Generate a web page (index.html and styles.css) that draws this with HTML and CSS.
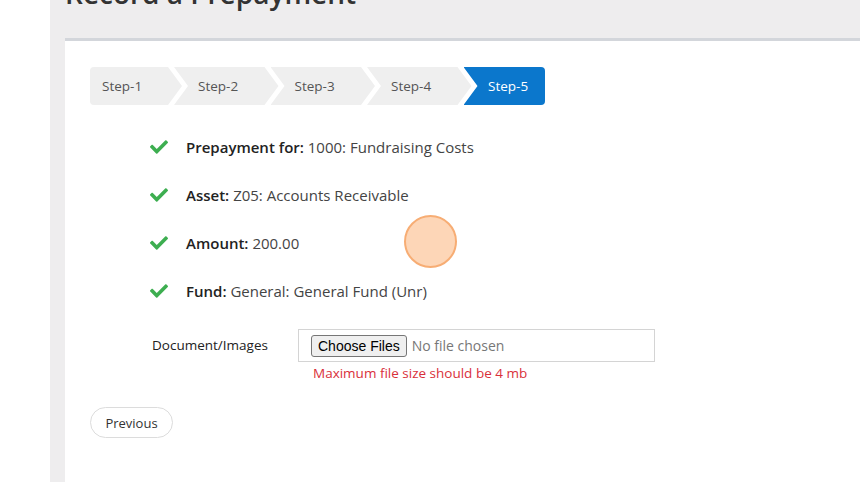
FILE: index.html
```html
<!DOCTYPE html>
<html lang="en">
<head>
<meta charset="utf-8">
<title>Record a Prepayment</title>
<link rel="stylesheet" href="styles.css">
</head>
<body>
<div class="gutter"></div>
<main class="panel">
  <h1 class="title">Record a Prepayment</h1>
  <section class="card">
    <nav class="steps">
      <div class="step first">Step-1</div>
      <div class="step">Step-2</div>
      <div class="step">Step-3</div>
      <div class="step">Step-4</div>
      <div class="step last active">Step-5</div>
    </nav>

    <ul class="summary">
      <li class="item">
        <svg class="check" viewBox="0 0 512 512" aria-hidden="true"><path d="M173.9 439.4L7.5 273c-10-10-10-26.2 0-36.2l36.2-36.2c10-10 26.2-10 36.2 0L192 312.7 432.1 72.6c10-10 26.2-10 36.2 0l36.2 36.2c10 10 10 26.2 0 36.2L210.1 439.4c-10 10-26.2 10-36.2 0z"/></svg>
        <span class="text"><span class="label">Prepayment for:</span> <span class="value">1000: Fundraising Costs</span></span>
      </li>
      <li class="item">
        <svg class="check" viewBox="0 0 512 512" aria-hidden="true"><path d="M173.9 439.4L7.5 273c-10-10-10-26.2 0-36.2l36.2-36.2c10-10 26.2-10 36.2 0L192 312.7 432.1 72.6c10-10 26.2-10 36.2 0l36.2 36.2c10 10 10 26.2 0 36.2L210.1 439.4c-10 10-26.2 10-36.2 0z"/></svg>
        <span class="text"><span class="label">Asset:</span> <span class="value">Z05: Accounts Receivable</span></span>
      </li>
      <li class="item">
        <svg class="check" viewBox="0 0 512 512" aria-hidden="true"><path d="M173.9 439.4L7.5 273c-10-10-10-26.2 0-36.2l36.2-36.2c10-10 26.2-10 36.2 0L192 312.7 432.1 72.6c10-10 26.2-10 36.2 0l36.2 36.2c10 10 10 26.2 0 36.2L210.1 439.4c-10 10-26.2 10-36.2 0z"/></svg>
        <span class="text"><span class="label">Amount:</span> <span class="value">200.00</span></span>
      </li>
      <li class="item">
        <svg class="check" viewBox="0 0 512 512" aria-hidden="true"><path d="M173.9 439.4L7.5 273c-10-10-10-26.2 0-36.2l36.2-36.2c10-10 26.2-10 36.2 0L192 312.7 432.1 72.6c10-10 26.2-10 36.2 0l36.2 36.2c10 10 10 26.2 0 36.2L210.1 439.4c-10 10-26.2 10-36.2 0z"/></svg>
        <span class="text"><span class="label">Fund:</span> <span class="value">General: General Fund (Unr)</span></span>
      </li>
    </ul>

    <div class="upload">
      <label class="upload-label" for="docs">Document/Images</label>
      <div class="upload-field">
        <div class="file-box"><input id="docs" class="file-input" type="file" multiple></div>
        <div class="error">Maximum file size should be 4 mb</div>
      </div>
    </div>

    <button class="btn-prev" type="button">Previous</button>
  </section>
  <div class="cursor"></div>
</main>
</body>
</html>
```

FILE: styles.css
```css
html, body {
  margin: 0;
  padding: 0;
  height: 100%;
}
body {
  display: flex;
  background: #ffffff;
  font-family: "Open Sans", "Liberation Sans", sans-serif;
  color: #333;
  overflow: hidden;
}
.gutter {
  width: 50px;
  flex: none;
  background: #ffffff;
}
.panel {
  position: relative;
  flex: 1;
  background: #eeedee;
  padding-left: 15px;
  display: flex;
  flex-direction: column;
}
.title {
  margin: -26px 0 26px 0;
  font-size: 28px;
  line-height: 38px;
  font-weight: 600;
  color: #333;
  white-space: nowrap;
}
.card {
  flex: 1;
  background: #ffffff;
  border-top: 3px solid #d3d6db;
  padding: 26px 0 0 25px;
}

/* stepper */
.steps {
  display: flex;
  height: 38px;
}
.step {
  width: 104.5px;
  height: 38px;
  box-sizing: border-box;
  padding-left: 24px;
  margin-left: -8px;
  background: #efefef;
  color: #555;
  font-size: 13.5px;
  line-height: 39px;
  clip-path: polygon(0 0, calc(100% - 14px) 0, 100% 50%, calc(100% - 14px) 100%, 0 100%, 14px 50%);
}
.step.first {
  width: 92px;
  margin-left: 0;
  padding-left: 12px;
  border-radius: 4px 0 0 4px;
  clip-path: polygon(0 0, calc(100% - 14px) 0, 100% 50%, calc(100% - 14px) 100%, 0 100%);
}
.step.last {
  width: 81.5px;
  padding-left: 24.5px;
  border-radius: 0 4px 4px 0;
  clip-path: polygon(0 0, 100% 0, 100% 100%, 0 100%, 14px 50%);
}
.step.active {
  background: #0b77cc;
  color: #ffffff;
}

/* summary list */
.summary {
  list-style: none;
  margin: 30px 0 0 0;
  padding: 0 0 0 60px;
}
.item {
  display: flex;
  align-items: center;
  height: 24px;
  margin-bottom: 24px;
  font-size: 15px;
}
.item:last-child {
  margin-bottom: 0;
}
.check {
  width: 18px;
  height: 18px;
  fill: #3dae50;
  margin-right: 18px;
  flex: none;
}
.text {
  white-space: nowrap;
}
.label {
  font-weight: 600;
  color: #222;
}
.value {
  color: #444;
}

/* upload */
.upload {
  display: flex;
  margin-top: 26px;
  padding-left: 62px;
}
.upload-label {
  width: 146px;
  flex: none;
  font-size: 13.5px;
  color: #222;
  line-height: 33px;
}
.file-box {
  width: 357px;
  height: 33px;
  box-sizing: border-box;
  border: 1px solid #d4d4d4;
  padding: 0 0 0 12px;
  display: flex;
  align-items: center;
}
.file-input {
  font-family: "Open Sans", "Liberation Sans", sans-serif;
  font-size: 14px;
  color: #777;
}
.file-input::file-selector-button {
  font-family: "Liberation Sans", Arial, sans-serif;
  font-size: 14px;
  color: #000;
  background: #efefef;
  border: 1px solid #767676;
  border-radius: 3px;
  padding: 2px 6px;
  margin-right: 5px;
}
.error {
  margin: 2px 0 0 15px;
  font-size: 13.5px;
  line-height: 18px;
  color: #d9303a;
}

/* previous button */
.btn-prev {
  display: block;
  margin-top: 25px;
  width: 83px;
  height: 31px;
  border: 1px solid #dcdcdc;
  border-radius: 16px;
  background: #ffffff;
  font-family: "Open Sans", "Liberation Sans", sans-serif;
  font-size: 13px;
  color: #333;
  padding: 0;
}

/* click indicator overlay */
.cursor {
  position: absolute;
  left: 354px;
  top: 215px;
  width: 49px;
  height: 49px;
  border-radius: 50%;
  background: #fdd6b7;
  border: 2px solid #f7ad74;
}
```
